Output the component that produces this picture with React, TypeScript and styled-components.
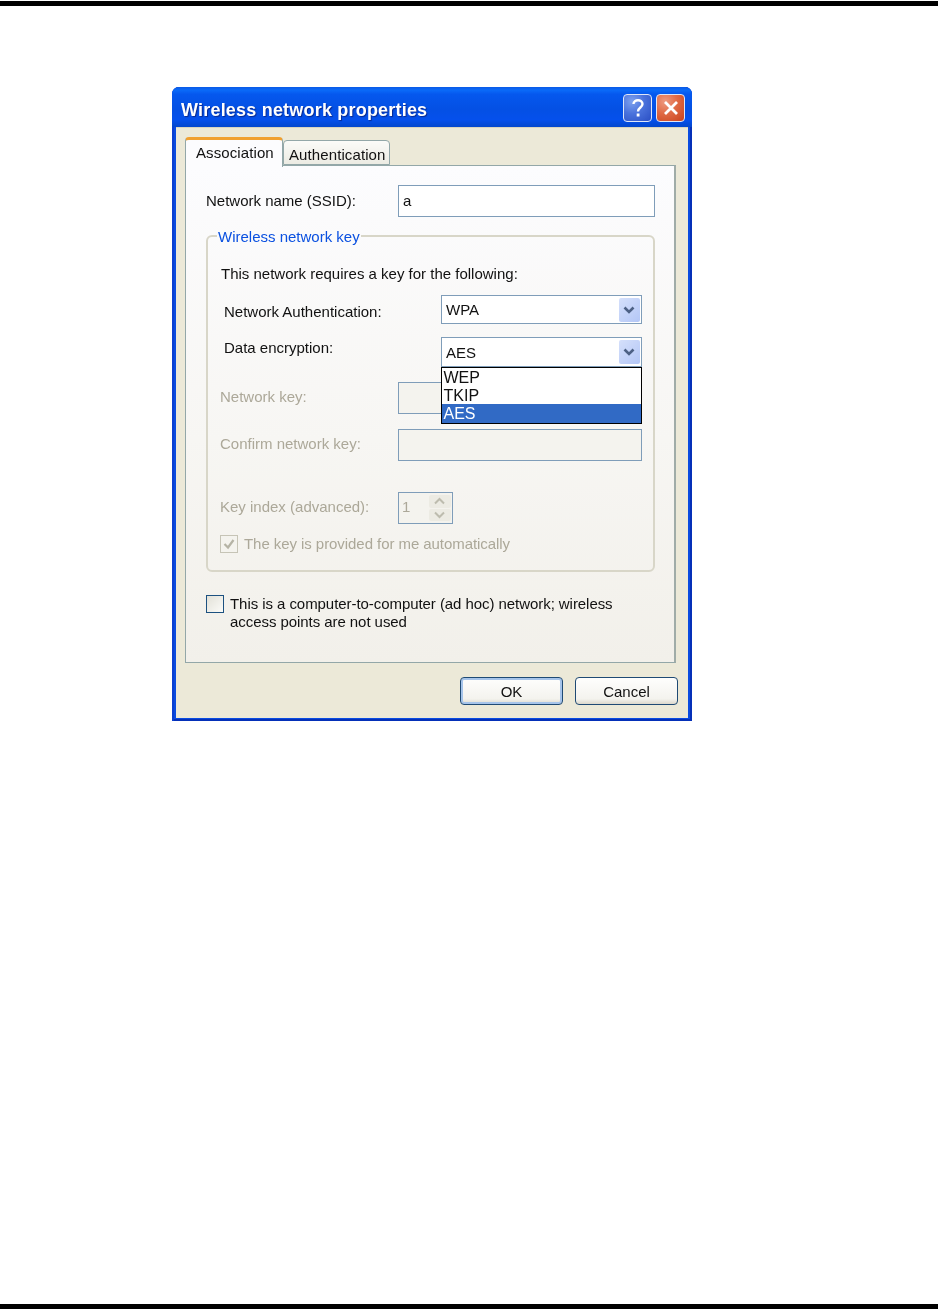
import React from "react";
import styled, { createGlobalStyle } from "styled-components";

const GlobalStyle = createGlobalStyle`
  html, body {
    margin: 0;
    padding: 0;
    background: #fff;
  }
  body {
    font-family: "Liberation Sans", Arial, sans-serif;
  }
`;

const Page = styled.div`
  width: 938px;
  height: 1309px;
  display: flex;
  flex-direction: column;
  overflow: hidden;
`;

const Rule = styled.div<{ $bottom?: boolean }>`
  height: 5px;
  background: #000;
  margin-top: ${(props) => (props.$bottom ? "auto" : "1px")};
`;

const Window = styled.div`
  width: 520px;
  height: 634px;
  margin: 81px 0 0 172px;
  display: flex;
  flex-direction: column;
  background: #0a4be0;
  border-radius: 7px 7px 0 0;
  filter: blur(0.5px);
  box-shadow: inset 2px 0 0 #0a3fd0, inset -2px 0 0 #0530b8, inset 0 -2px 0 #0530b8;
`;

const TitleBar = styled.div`
  height: 40px;
  flex: none;
  display: flex;
  align-items: center;
  padding: 0 7px 0 9px;
  border-radius: 7px 7px 0 0;
  background: linear-gradient(
    180deg,
    #0a5ae6 0%,
    #0a6af8 8%,
    #0558ee 18%,
    #0450e4 55%,
    #0550ec 82%,
    #0347cc 100%
  );
`;

const Title = styled.div`
  flex: 1;
  margin-top: 7px;
  font-size: 18px;
  font-weight: 700;
  letter-spacing: 0.2px;
  color: #fff;
  text-shadow: 1px 1px 1px #0a2a90;
`;

const CaptionButton = styled.div<{ $close?: boolean }>`
  width: 29px;
  height: 28px;
  margin-left: 4px;
  margin-top: 1px;
  display: flex;
  align-items: center;
  justify-content: center;
  box-sizing: border-box;
  border: 1px solid #dfe7f8;
  border-radius: 4px;
  background: ${(props) =>
    props.$close
      ? "radial-gradient(circle at 30% 25%, #ee9a80 0%, #df6a45 45%, #c9421c 100%)"
      : "radial-gradient(circle at 30% 25%, #7fa2ee 0%, #4a72dc 45%, #2a4fc4 100%)"};
`;

const Body = styled.div`
  flex: 1;
  margin: 0 4px 3px;
  background: #ece9d8;
  display: flex;
  flex-direction: column;
  border-top: 1px solid #d8d4c0;
`;

const TabStrip = styled.div`
  height: 37px;
  flex: none;
  margin-left: 9px;
  display: flex;
  align-items: flex-end;
  position: relative;
  z-index: 1;
`;

const Tab = styled.div<{ $active?: boolean }>`
  box-sizing: border-box;
  height: ${(props) => (props.$active ? "30px" : "25px")};
  width: ${(props) => (props.$active ? "98px" : "107px")};
  margin-bottom: ${(props) => (props.$active ? "-2px" : "0")};
  padding: ${(props) => (props.$active ? "4px 0 0 10px" : "5px 0 0 5px")};
  font-size: 15px;
  letter-spacing: 0.1px;
  color: #111;
  white-space: nowrap;
  border: 1px solid #93a7a8;
  border-bottom: ${(props) => (props.$active ? "none" : "1px solid #93a7a8")};
  border-top: ${(props) => (props.$active ? "3px solid #f0a030" : "1px solid #93a7a8")};
  border-radius: 4px 4px 0 0;
  background: ${(props) =>
    props.$active ? "#fcfcfe" : "linear-gradient(180deg, #fbfbf8, #ecebe3)"};
`;

const Panel = styled.div`
  box-sizing: border-box;
  width: 491px;
  height: 498px;
  flex: none;
  margin-left: 9px;
  padding: 19px 19px 0 20px;
  border: 1px solid #93a7a8;
  border-right: 2px solid #a0aca8;
  background: linear-gradient(180deg, #fcfcfe 0%, #f7f6f3 55%, #f2f0ea 100%);
`;

const SsidRow = styled.div`
  display: flex;
  align-items: center;
  height: 32px;
`;

const Label = styled.div<{ $lift?: number; $disabled?: boolean }>`
  flex: none;
  margin-bottom: ${(props) => props.$lift ?? 0}px;
  font-size: 15px;
  line-height: 18px;
  white-space: nowrap;
  color: ${(props) => (props.$disabled ? "#aca899" : "#111")};
`;

const TextInput = styled.div<{ $width: number; $disabled?: boolean; $inset?: boolean }>`
  box-sizing: border-box;
  flex: none;
  width: ${(props) => props.$width}px;
  height: 100%;
  margin-left: auto;
  margin-right: ${(props) => (props.$inset ? "11px" : "0")};
  padding: 0 0 2px 4px;
  display: flex;
  align-items: center;
  font-size: 15px;
  color: #111;
  border: 1.5px solid #7f9db9;
  background: ${(props) => (props.$disabled ? "#f4f3ee" : "#fff")};
`;

const Group = styled.fieldset`
  box-sizing: border-box;
  width: 449px;
  height: 345px;
  margin: 10px 0 0;
  padding: 0;
  min-width: 0;
  border: 2px solid #d8d6c8;
  border-radius: 6px;
`;

const Legend = styled.legend`
  margin-left: 9px;
  padding: 0 1px;
  height: 18px;
  line-height: 20px;
  font-size: 15px;
  color: #0a50e0;
`;

const Row = styled.div<{ $top: number; $height: number; $left: number }>`
  display: flex;
  align-items: center;
  height: ${(props) => props.$height}px;
  margin-top: ${(props) => props.$top}px;
  padding-left: ${(props) => props.$left}px;
`;

const Select = styled.div`
  position: relative;
  box-sizing: border-box;
  width: 201px;
  height: 100%;
  flex: none;
  margin-left: auto;
  margin-right: 11px;
  padding: 0 1.5px 0 4px;
  display: flex;
  align-items: center;
  justify-content: space-between;
  font-size: 15px;
  color: #111;
  background: #fff;
  border: 1.5px solid #7f9db9;
`;

const SelectArrow = styled.div`
  width: 21px;
  height: 24px;
  display: flex;
  align-items: center;
  justify-content: center;
  border-radius: 2px;
  background: linear-gradient(135deg, #d5e0fb, #b3c6f6);
`;

const OptionList = styled.div`
  position: absolute;
  left: -1.5px;
  right: -1px;
  top: calc(100% + 0.5px);
  z-index: 2;
  box-sizing: border-box;
  height: 57px;
  background: #fff;
  border: 1px solid #000;
  font-size: 16px;
`;

const Option = styled.div<{ $selected?: boolean }>`
  height: 18.4px;
  line-height: 19px;
  padding-left: 2px;
  color: ${(props) => (props.$selected ? "#fff" : "#111")};
  background: ${(props) => (props.$selected ? "#316ac5" : "transparent")};
`;

const Spinner = styled.div`
  box-sizing: border-box;
  margin-left: auto;
  margin-right: 200px;
  width: 55px;
  height: 100%;
  flex: none;
  padding: 2px 1.5px 2px 3px;
  display: flex;
  align-items: center;
  justify-content: space-between;
  font-size: 15px;
  color: #aca899;
  border: 1.5px solid #7f9db9;
  background: #f4f3ee;
`;

const SpinValue = styled.div`
  margin-bottom: 4px;
`;

const SpinButtons = styled.div`
  width: 22px;
  height: 100%;
  display: flex;
  flex-direction: column;
  gap: 1px;
`;

const SpinButton = styled.div`
  flex: 1;
  display: flex;
  align-items: center;
  justify-content: center;
  border-radius: 2px;
  background: #ecebe3;
`;

const CheckBox = styled.div<{ $disabled?: boolean }>`
  box-sizing: border-box;
  flex: none;
  width: 18px;
  height: 18px;
  display: flex;
  align-items: center;
  justify-content: center;
  border: 1.5px solid ${(props) => (props.$disabled ? "#c6c4b6" : "#1c5180")};
  background: ${(props) =>
    props.$disabled ? "#f4f3ee" : "linear-gradient(135deg, #e2e1d8, #fbfbf8)"};
`;

const CheckText = styled.div<{ $disabled?: boolean }>`
  margin-left: 6px;
  font-size: 15px;
  line-height: 18px;
  letter-spacing: -0.06px;
  white-space: nowrap;
  color: ${(props) => (props.$disabled ? "#aca899" : "#111")};
`;

const AdhocRow = styled.div`
  display: flex;
  align-items: flex-start;
  margin-top: 23px;
`;

const Footer = styled.div`
  display: flex;
  justify-content: flex-end;
  gap: 12px;
  padding: 14px 10px 0 0;
`;

const Button = styled.div<{ $primary?: boolean }>`
  box-sizing: border-box;
  width: 103px;
  height: 28px;
  display: flex;
  align-items: center;
  justify-content: center;
  font-size: 15px;
  color: #111;
  border: 1.5px solid #1f4a74;
  border-radius: 4px;
  background: linear-gradient(180deg, #fefefd, #f4f3ee 80%, #dcd8cc);
  box-shadow: ${(props) =>
    props.$primary ? "inset 0 0 0 2px #a6c4ea" : "none"};
`;

function Chevron({ color }: { color: string }) {
  return (
    <svg width="16" height="16" viewBox="0 0 16 16">
      <path d="M3.5 5.5 L8 10 L12.5 5.5" fill="none" stroke={color} strokeWidth="2.6" />
    </svg>
  );
}

function SpinArrow({ up }: { up?: boolean }) {
  return (
    <svg width="13" height="8" viewBox="0 0 13 8">
      <path
        d={up ? "M2 6.5 L6.5 2 L11 6.5" : "M2 1.5 L6.5 6 L11 1.5"}
        fill="none"
        stroke="#bdbcae"
        strokeWidth="2"
      />
    </svg>
  );
}

export default function App() {
  return (
    <Page>
      <GlobalStyle />
      <Rule />
      <Window>
        <TitleBar>
          <Title>Wireless network properties</Title>
          <CaptionButton>
            <svg width="18" height="22" viewBox="0 0 18 22">
              <path
                d="M4.5 7 C4.5 2 13.5 2 13.5 7 C13.5 10.5 9 10.5 9 14.5"
                fill="none"
                stroke="#fff"
                strokeWidth="2.4"
              />
              <rect x="7.7" y="16.5" width="2.8" height="3" fill="#fff" />
            </svg>
          </CaptionButton>
          <CaptionButton $close>
            <svg width="18" height="18" viewBox="0 0 18 18">
              <path d="M3 3 L15 15 M15 3 L3 15" stroke="#fff" strokeWidth="2.8" />
            </svg>
          </CaptionButton>
        </TitleBar>
        <Body>
          <TabStrip>
            <Tab $active>Association</Tab>
            <Tab>Authentication</Tab>
          </TabStrip>
          <Panel>
            <SsidRow>
              <Label>Network name (SSID):</Label>
              <TextInput $width={257}>a</TextInput>
            </SsidRow>
            <Group>
              <Legend>Wireless network key</Legend>
              <Row $top={19} $height={20} $left={13}>
                <Label>This network requires a key for the following:</Label>
              </Row>
              <Row $top={11} $height={29} $left={16}>
                <Label $lift={-5}>Network Authentication:</Label>
                <Select>
                  WPA
                  <SelectArrow>
                    <Chevron color="#4d6185" />
                  </SelectArrow>
                </Select>
              </Row>
              <Row $top={13} $height={30} $left={16}>
                <Label $lift={8}>Data encryption:</Label>
                <Select>
                  AES
                  <SelectArrow>
                    <Chevron color="#4d6185" />
                  </SelectArrow>
                  <OptionList>
                    <Option>WEP</Option>
                    <Option>TKIP</Option>
                    <Option $selected>AES</Option>
                  </OptionList>
                </Select>
              </Row>
              <Row $top={15} $height={32} $left={12}>
                <Label $disabled $lift={2}>Network key:</Label>
                <TextInput $width={244} $disabled $inset />
              </Row>
              <Row $top={15} $height={32} $left={12}>
                <Label $disabled $lift={2}>Confirm network key:</Label>
                <TextInput $width={244} $disabled $inset />
              </Row>
              <Row $top={31} $height={32} $left={12}>
                <Label $disabled $lift={2}>Key index (advanced):</Label>
                <Spinner>
                  <SpinValue>1</SpinValue>
                  <SpinButtons>
                    <SpinButton>
                      <SpinArrow up />
                    </SpinButton>
                    <SpinButton>
                      <SpinArrow />
                    </SpinButton>
                  </SpinButtons>
                </Spinner>
              </Row>
              <Row $top={10} $height={20} $left={12}>
                <CheckBox $disabled>
                  <svg width="14" height="14" viewBox="0 0 14 14">
                    <path d="M2.5 7 L6 10.5 L11.5 3" fill="none" stroke="#b5b3a5" strokeWidth="2.2" />
                  </svg>
                </CheckBox>
                <CheckText $disabled>The key is provided for me automatically</CheckText>
              </Row>
            </Group>
            <AdhocRow>
              <CheckBox />
              <CheckText>
                This is a computer-to-computer (ad hoc) network; wireless
                <br />
                access points are not used
              </CheckText>
            </AdhocRow>
          </Panel>
          <Footer>
            <Button $primary>OK</Button>
            <Button>Cancel</Button>
          </Footer>
        </Body>
      </Window>
      <Rule $bottom />
    </Page>
  );
}
